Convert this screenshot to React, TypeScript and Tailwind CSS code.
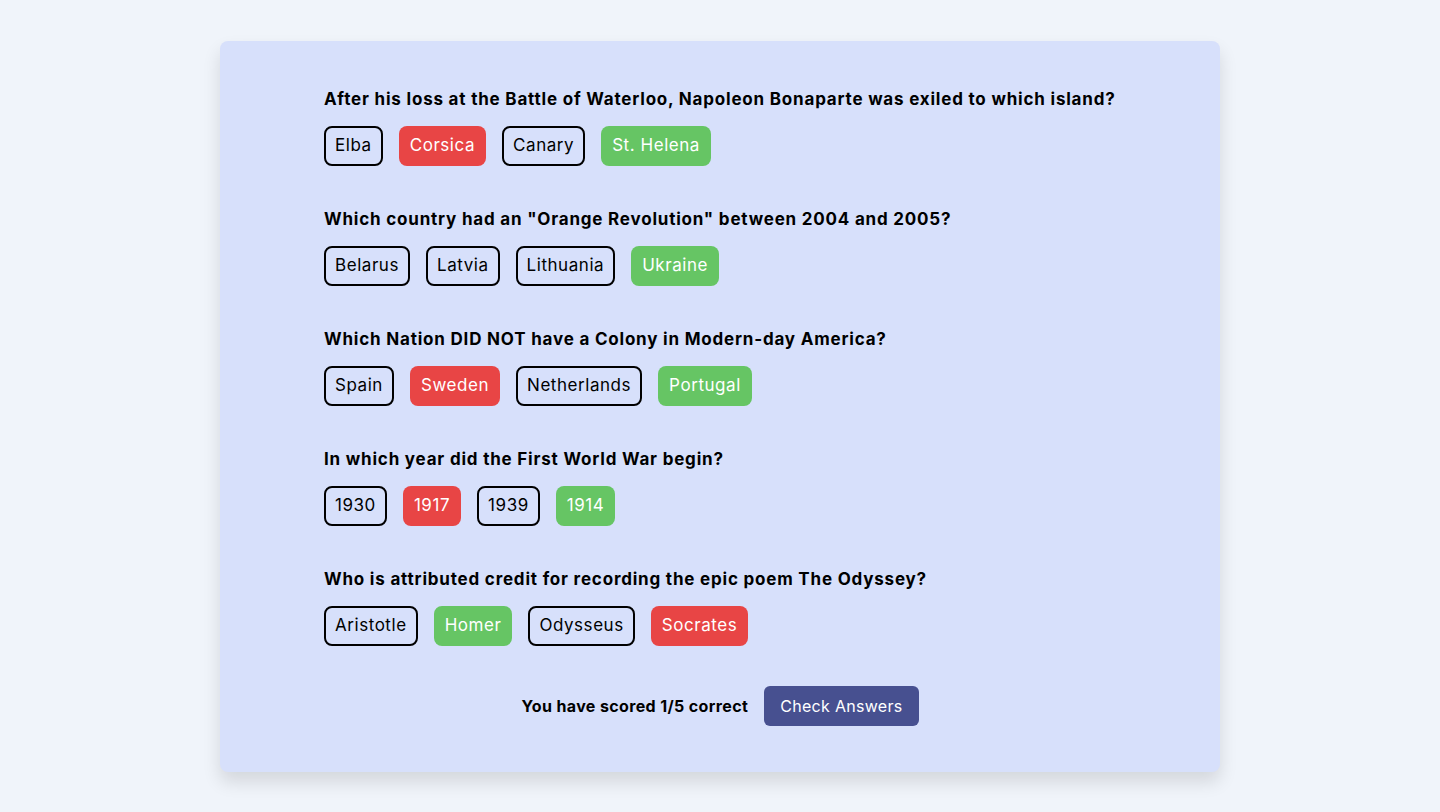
import { clsx } from 'clsx'

type Answer = { text: string; state?: 'wrong' | 'right' }

const QUESTIONS: { q: string; answers: Answer[] }[] = [
  {
    q: 'After his loss at the Battle of Waterloo, Napoleon Bonaparte was exiled to which island?',
    answers: [{ text: 'Elba' }, { text: 'Corsica', state: 'wrong' }, { text: 'Canary' }, { text: 'St. Helena', state: 'right' }],
  },
  {
    q: 'Which country had an "Orange Revolution" between 2004 and 2005?',
    answers: [{ text: 'Belarus' }, { text: 'Latvia' }, { text: 'Lithuania' }, { text: 'Ukraine', state: 'right' }],
  },
  {
    q: 'Which Nation DID NOT have a Colony in Modern-day America?',
    answers: [{ text: 'Spain' }, { text: 'Sweden', state: 'wrong' }, { text: 'Netherlands' }, { text: 'Portugal', state: 'right' }],
  },
  {
    q: 'In which year did the First World War begin?',
    answers: [{ text: '1930' }, { text: '1917', state: 'wrong' }, { text: '1939' }, { text: '1914', state: 'right' }],
  },
  {
    q: 'Who is attributed credit for recording the epic poem The Odyssey?',
    answers: [{ text: 'Aristotle' }, { text: 'Homer', state: 'right' }, { text: 'Odysseus' }, { text: 'Socrates', state: 'wrong' }],
  },
]

export default function App() {
  return (
    <div className="min-h-screen bg-[#f0f4fa] pt-[41px] font-['Inter',sans-serif] text-black">
      <main className="mx-auto w-[1000px] rounded-[8px] bg-[#d7e0fb] px-[104px] pt-[46px] pb-[46px] shadow-[0_10px_18px_rgba(0,0,0,0.12)]">
        {QUESTIONS.map(item => (
          <section key={item.q} className="mb-[41px]">
            <h2 className="whitespace-nowrap text-[17px] leading-[24px] font-bold tracking-[0.8px]">{item.q}</h2>
            <div className="mt-[15px] flex gap-4">
              {item.answers.map(a => (
                <span
                  key={a.text}
                  className={clsx(
                    'flex h-[40px] items-center rounded-[8px] px-[9px] text-[17px] tracking-[0.55px]',
                    !a.state && 'border-2 border-black',
                    a.state === 'wrong' && 'bg-[#e84545] px-[11px] text-white',
                    a.state === 'right' && 'bg-[#66c564] px-[11px] text-white',
                  )}
                >
                  {a.text}
                </span>
              ))}
            </div>
          </section>
        ))}

        <div className="-mt-px flex items-center justify-center gap-4">
          <p className="text-[16px] font-bold tracking-[0.37px]">You have scored 1/5 correct</p>
          <button className="h-[40px] rounded-[6px] bg-[#475090] px-4 text-[16px] tracking-[0.3px] text-white">Check Answers</button>
        </div>
      </main>
    </div>
  )
}
